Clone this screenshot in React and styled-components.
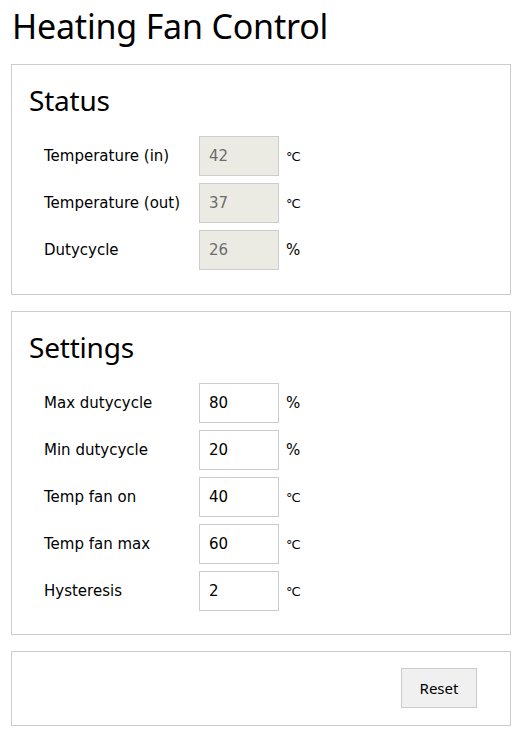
import React, { useState } from 'react';
import styled, { createGlobalStyle } from 'styled-components';

const GlobalStyle = createGlobalStyle`
  html, body {
    margin: 0;
    padding: 0;
    background: #fff;
  }
`;

const Page = styled.div`
  padding: 0 17px 0 11px;
  font-family: 'DejaVu Sans', Verdana, sans-serif;
  color: #000;
`;

const Title = styled.h1`
  margin: 0;
  padding: 6px 0 0 1px;
  height: 64px;
  box-sizing: border-box;
  font-family: 'Noto Sans', 'Open Sans', sans-serif;
  font-weight: 400;
  font-size: 34px;
  line-height: 40px;
  letter-spacing: -0.2px;
`;

const Panel = styled.section`
  border: 1px solid #cccccc;
  width: 500px;
  box-sizing: border-box;
  padding: ${(p) => p.$pad || '0 16px 24px 16px'};
  margin-bottom: 16px;
`;

const PanelTitle = styled.h2`
  margin: 0;
  padding: 15px 0 0 1px;
  height: 71px;
  box-sizing: border-box;
  font-family: 'Noto Sans', 'Open Sans', sans-serif;
  font-weight: 400;
  font-size: 28px;
  line-height: 40px;
  letter-spacing: -0.2px;
`;

const Rows = styled.div`
  display: grid;
  grid-template-columns: 155px 80px auto;
  row-gap: 7px;
  align-items: center;
  padding-left: 16px;
`;

const Label = styled.label`
  font-size: 15px;
`;

const Field = styled.input`
  width: 80px;
  height: 40px;
  box-sizing: border-box;
  border: 1px solid #cccccc;
  padding: 0 9px;
  font-family: 'DejaVu Sans', Verdana, sans-serif;
  font-size: 15px;
  color: ${(p) => (p.disabled ? '#6d6d6d' : '#000')};
  background: ${(p) => (p.disabled ? '#ebebe4' : '#fff')};
  outline: none;
`;

const Unit = styled.span`
  font-size: ${(p) => (p.$tight ? '13px' : '15px')};
  padding-left: 7px;
  letter-spacing: ${(p) => (p.$tight ? '-1px' : '0')};
`;

const Footer = styled.div`
  display: flex;
  justify-content: flex-end;
  padding: 16px 33px 17px 0;
`;

const Button = styled.button`
  width: 76px;
  height: 40px;
  background: #f0f0f0;
  border: 1px solid #cccccc;
  font-family: 'Noto Sans', 'Open Sans', sans-serif;
  font-size: 15px;
  color: #000;
  cursor: pointer;
`;

const statusRows = [
  { label: 'Temperature (in)', value: '42', unit: '°C' },
  { label: 'Temperature (out)', value: '37', unit: '°C' },
  { label: 'Dutycycle', value: '26', unit: '%' },
];

const defaults = {
  maxDuty: '80',
  minDuty: '20',
  tempOn: '40',
  tempMax: '60',
  hyst: '2',
};

const settingRows = [
  { key: 'maxDuty', label: 'Max dutycycle', unit: '%' },
  { key: 'minDuty', label: 'Min dutycycle', unit: '%' },
  { key: 'tempOn', label: 'Temp fan on', unit: '°C' },
  { key: 'tempMax', label: 'Temp fan max', unit: '°C' },
  { key: 'hyst', label: 'Hysteresis', unit: '°C' },
];

export default function App() {
  const [settings, setSettings] = useState(defaults);

  return (
    <Page>
      <GlobalStyle />
      <Title>Heating Fan Control</Title>

      <Panel>
        <PanelTitle>Status</PanelTitle>
        <Rows>
          {statusRows.map((r) => (
            <React.Fragment key={r.label}>
              <Label>{r.label}</Label>
              <Field disabled value={r.value} readOnly />
              <Unit $tight={r.unit !== '%'}>{r.unit}</Unit>
            </React.Fragment>
          ))}
        </Rows>
      </Panel>

      <Panel $pad="0 16px 23px 16px">
        <PanelTitle>Settings</PanelTitle>
        <Rows>
          {settingRows.map((r) => (
            <React.Fragment key={r.key}>
              <Label>{r.label}</Label>
              <Field
                value={settings[r.key]}
                onChange={(e) => setSettings({ ...settings, [r.key]: e.target.value })}
              />
              <Unit $tight={r.unit !== '%'}>{r.unit}</Unit>
            </React.Fragment>
          ))}
        </Rows>
      </Panel>

      <Panel $pad="0">
        <Footer>
          <Button onClick={() => setSettings(defaults)}>Reset</Button>
        </Footer>
      </Panel>
    </Page>
  );
}
